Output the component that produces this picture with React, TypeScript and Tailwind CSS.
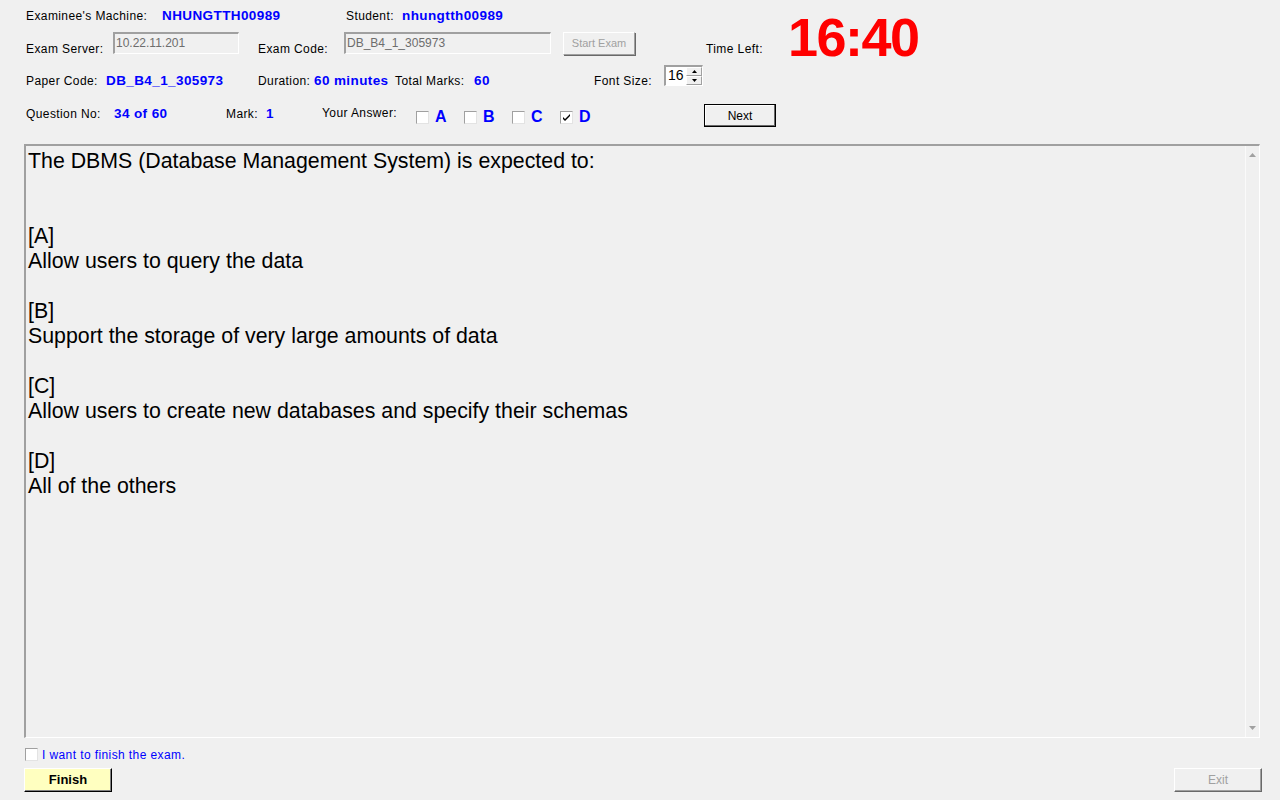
import React from 'react';

const label = 'text-[12px] text-black tracking-[0.4px] whitespace-nowrap';
const value = 'text-[13.5px] font-bold text-[#0000ff] tracking-[0.4px] whitespace-nowrap';

// sunken 3D border used by textboxes and the question area
const sunken = 'border-t-2 border-l-2 border-b border-r border-t-[#a0a0a0] border-l-[#a0a0a0] border-b-white border-r-white';

const CheckBox = ({ checked = false }: { checked?: boolean }) => (
  <span className="w-[13px] h-[13px] bg-white border border-t-[#a0a0a0] border-l-[#a0a0a0] border-b-[#e3e3e3] border-r-[#e3e3e3] flex items-center justify-center shrink-0">
    {checked && (
      <svg width="9" height="9" viewBox="0 0 9 9">
        <path d="M1 4 L3 6 L8 1 L8 3 L3 8 L1 6 Z" fill="#000" />
      </svg>
    )}
  </span>
);

const Answer = ({ letter, checked }: { letter: string; checked?: boolean }) => (
  <div className="w-[48px] flex items-center gap-[6px] mt-[5px]">
    <CheckBox checked={checked} />
    <span className="text-[16px] font-bold text-[#0000ff] leading-none">{letter}</span>
  </div>
);

const App = () => {
  return (
    <div
      className="w-[1280px] h-[800px] bg-[#f0f0f0] overflow-hidden flex flex-col"
      style={{ fontFamily: '"Liberation Sans", Arial, sans-serif' }}
    >
      {/* row 1 */}
      <div className="flex items-center h-[16px] mt-[8px] pl-[26px]">
        <span className={`${label} w-[136px]`}>Examinee's Machine:</span>
        <span className={`${value} w-[184px]`}>NHUNGTTH00989</span>
        <span className={`${label} w-[56px]`}>Student:</span>
        <span className={value}>nhungtth00989</span>
      </div>

      {/* row 2 */}
      <div className="flex items-start h-[23px] mt-[8px] pl-[26px]">
        <span className={`${label} w-[87px] mt-[8px]`}>Exam Server:</span>
        <div className={`${sunken} w-[126px] h-[22px] px-[1px] text-[12px] text-[#6d6d6d] leading-[18px]`}>10.22.11.201</div>
        <span className={`${label} w-[86px] ml-[19px] mt-[8px]`}>Exam Code:</span>
        <div className={`${sunken} w-[207px] h-[22px] px-[1px] text-[12px] text-[#6d6d6d] leading-[18px]`}>DB_B4_1_305973</div>
        <button className="ml-[12px] w-[72px] h-[23px] border border-t-white border-l-white border-b-[#a0a0a0] border-r-[#a0a0a0] shadow-[1px_1px_0_#696969] text-[11px] text-[#a0a0a0] bg-[#f0f0f0]">
          Start Exam
        </button>
        <span className={`${label} w-[82px] ml-[71px] mt-[8px]`}>Time Left:</span>
        <span className="text-[54px] font-bold text-[#ff0000] leading-[23px] tracking-[-1.5px] -mt-[6px] ml-0">16:40</span>
      </div>

      {/* row 3 */}
      <div className="flex items-start h-[22px] mt-[10px] pl-[26px]">
        <span className={`${label} w-[80px] mt-[7px]`}>Paper Code:</span>
        <span className={`${value} w-[152px] mt-[6px]`}>DB_B4_1_305973</span>
        <span className={`${label} w-[56px] mt-[7px]`}>Duration:</span>
        <span className={`${value} w-[81px] mt-[6px]`}>60 minutes</span>
        <span className={`${label} w-[79px] mt-[7px]`}>Total Marks:</span>
        <span className={`${value} w-[120px] mt-[6px]`}>60</span>
        <span className={`${label} w-[70px] mt-[7px]`}>Font Size:</span>
        <div className={`${sunken} w-[39px] h-[21px] bg-white flex items-stretch`}>
          <span className="flex-1 text-[14px] leading-[17px] pl-[2px] text-black">16</span>
          <div className="w-[16px] flex flex-col">
            <span className="flex-1 bg-[#f0f0f0] border border-t-white border-l-white border-b-[#a0a0a0] border-r-[#a0a0a0] flex items-center justify-center">
              <svg width="5" height="3" viewBox="0 0 5 3"><path d="M2.5 0 L5 3 L0 3 Z" fill="#000" /></svg>
            </span>
            <span className="flex-1 bg-[#f0f0f0] border border-t-white border-l-white border-b-[#a0a0a0] border-r-[#a0a0a0] flex items-center justify-center">
              <svg width="5" height="3" viewBox="0 0 5 3"><path d="M0 0 L5 0 L2.5 3 Z" fill="#000" /></svg>
            </span>
          </div>
        </div>
      </div>

      {/* row 4 */}
      <div className="flex items-start h-[23px] mt-[17px] pl-[26px]">
        <span className={`${label} w-[88px] mt-[1px]`}>Question No:</span>
        <span className={`${value} w-[112px]`}>34 of 60</span>
        <span className={`${label} w-[40px] mt-[1px]`}>Mark:</span>
        <span className={`${value} w-[56px]`}>1</span>
        <span className={`${label} w-[94px]`}>Your Answer:</span>
        <Answer letter="A" />
        <Answer letter="B" />
        <Answer letter="C" />
        <Answer letter="D" checked />
        <button className="ml-[96px] w-[72px] h-[23px] border border-black bg-[#f0f0f0] shadow-[inset_-1px_-1px_0_#696969,inset_1px_1px_0_#fff] text-[12px] text-black">
          Next
        </button>
      </div>

      {/* question area */}
      <div className={`${sunken} mt-[17px] ml-[24px] w-[1236px] h-[594px] flex`}>
        <div className="flex-1 pl-[2px] pt-[3px] text-[21.33px] leading-[25px] text-black whitespace-pre">
          <div>The DBMS (Database Management System) is expected to:</div>
          <div>&nbsp;</div>
          <div>&nbsp;</div>
          <div>[A]</div>
          <div>Allow users to query the data</div>
          <div>&nbsp;</div>
          <div>[B]</div>
          <div>Support the storage of very large amounts of data</div>
          <div>&nbsp;</div>
          <div>[C]</div>
          <div>Allow users to create new databases and specify their schemas</div>
          <div>&nbsp;</div>
          <div>[D]</div>
          <div>All of the others</div>
        </div>
        <div className="w-[14px] border-l border-l-[#fafafa] bg-[#f0f0f0] flex flex-col justify-between items-center py-[7px]">
          <svg width="7" height="4" viewBox="0 0 7 4"><path d="M3.5 0 L7 4 L0 4 Z" fill="#a0a0a0" /></svg>
          <svg width="7" height="4" viewBox="0 0 7 4"><path d="M0 0 L7 0 L3.5 4 Z" fill="#a0a0a0" /></svg>
        </div>
      </div>

      {/* finish checkbox */}
      <div className="flex items-center gap-[4px] mt-[10px] ml-[25px] h-[13px]">
        <CheckBox />
        <span className="text-[12px] text-[#0000ff] tracking-[0.4px]">I want to finish the exam.</span>
      </div>

      {/* bottom buttons */}
      <div className="flex justify-between mt-[7px] ml-[24px] mr-[18px]">
        <button className="w-[88px] h-[24px] bg-[#ffffc0] border border-t-white border-l-white border-b-black border-r-black shadow-[inset_-1px_-1px_0_#808080] text-[13px] font-bold text-black">
          Finish
        </button>
        <button className="w-[88px] h-[24px] bg-[#f0f0f0] border border-t-white border-l-white border-b-[#696969] border-r-[#696969] shadow-[inset_-1px_-1px_0_#a0a0a0] text-[12px] text-[#a0a0a0]">
          Exit
        </button>
      </div>
    </div>
  );
};

export default App;
